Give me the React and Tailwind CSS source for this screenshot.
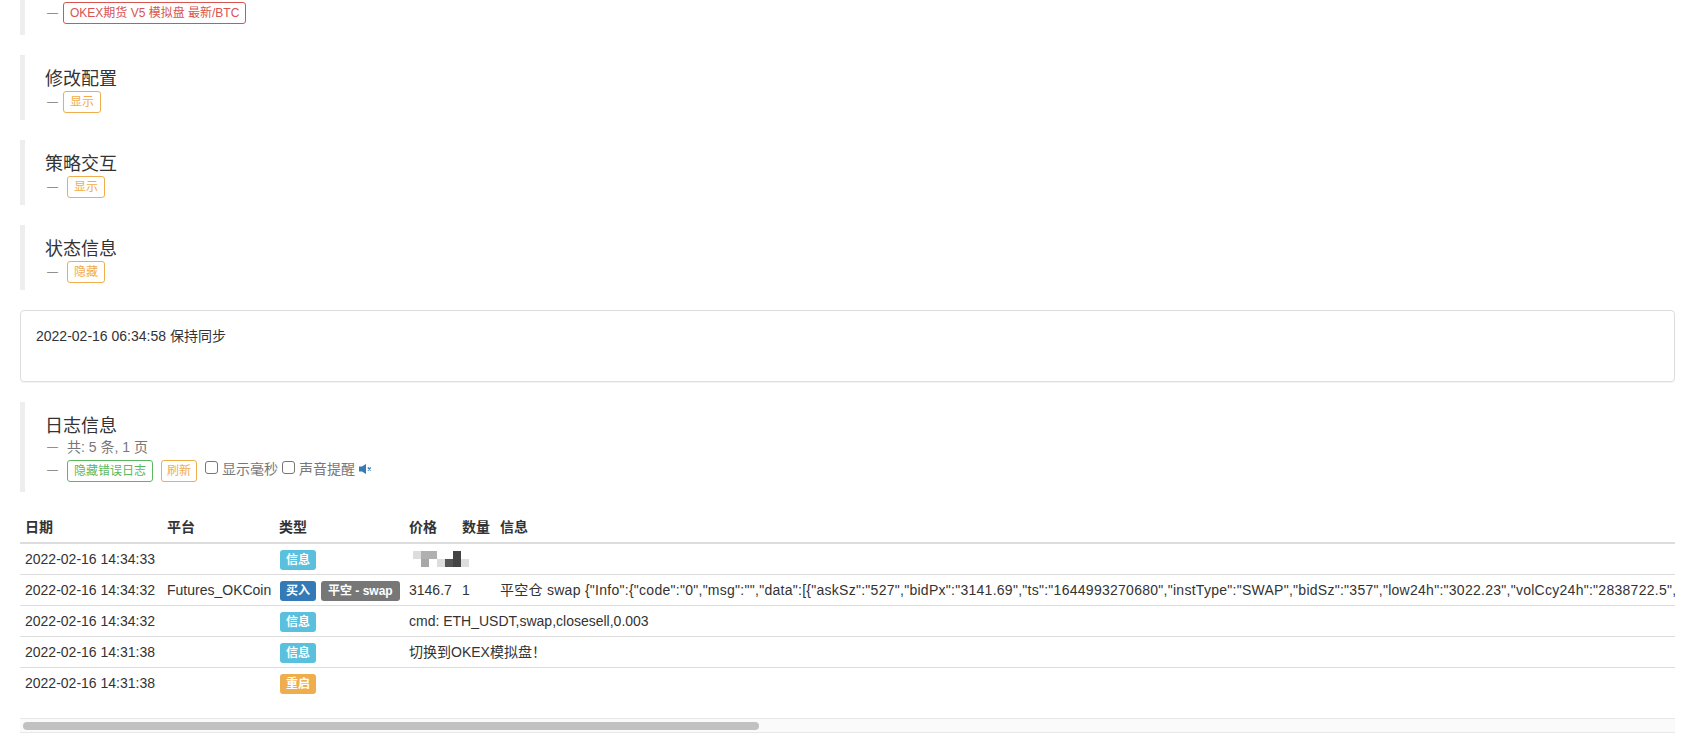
import React from "react";

const font = "font-['Liberation_Sans','Noto_Sans_CJK_SC',sans-serif]";

const Tag = ({ color, children, className = "px-[6px]" }) => {
  const colors = {
    red: "border-[#d9534f] text-[#d9534f]",
    orange: "border-[#f0ad4e] text-[#f0ad4e]",
    green: "border-[#5cb85c] text-[#5cb85c]",
  };
  return (
    <span
      className={`inline-block h-[22px] rounded-[3px] border text-xs leading-[20px] ${colors[color]} ${className}`}
    >
      {children}
    </span>
  );
};

const Dash = ({ className = "w-[16px]" }) => (
  <span className={`ml-[2px] block shrink-0 text-[11px] text-[#777] ${className}`}>—</span>
);

const Section = ({ title, children, className = "" }) => (
  <div className={`border-l-[5px] border-[#eee] pl-5 ${className}`}>
    {title ? (
      <h4 className="pt-[14px] text-lg leading-[20px] text-[#333]">{title}</h4>
    ) : null}
    {children}
  </div>
);

const Badge = ({ bg, children, className = "px-[6px]" }) => (
  <span
    className={`block h-5 rounded-[3px] text-xs leading-5 font-bold text-white ${bg} ${className}`}
  >
    {children}
  </span>
);

const longInfo =
  '平空仓 swap {"Info":{"code":"0","msg":"","data":[{"askSz":"527","bidPx":"3141.69","ts":"1644993270680","instType":"SWAP","bidSz":"357","low24h":"3022.23","volCcy24h":"2838722.5",';

const rows = [
  { date: "2022-02-16 14:34:33", type: <Badge bg="bg-[#5bc0de]">信息</Badge>, blur: true },
  {
    date: "2022-02-16 14:34:32",
    platform: "Futures_OKCoin",
    type: (
      <>
        <Badge bg="bg-[#337ab7]">买入</Badge>
        <Badge bg="bg-[#777]" className="px-[7px]">平空 - swap</Badge>
      </>
    ),
    price: "3146.7",
    amount: "1",
    info: longInfo,
  },
  {
    date: "2022-02-16 14:34:32",
    type: <Badge bg="bg-[#5bc0de]">信息</Badge>,
    msg: "cmd: ETH_USDT,swap,closesell,0.003",
  },
  {
    date: "2022-02-16 14:31:38",
    type: <Badge bg="bg-[#5bc0de]">信息</Badge>,
    msg: "切换到OKEX模拟盘！",
  },
  { date: "2022-02-16 14:31:38", type: <Badge bg="bg-[#f0ad4e]">重启</Badge> },
];

const Mosaic = () => (
  <svg width="60" height="16" viewBox="0 0 60 16" className="block" shapeRendering="crispEdges">
    <rect x="4" y="0" width="8" height="8" fill="#dddddd" />
    <rect x="12" y="0" width="16" height="8" fill="#b0b0b0" />
    <rect x="12" y="8" width="8" height="8" fill="#a8a8a8" />
    <rect x="28" y="8" width="8" height="8" fill="#dddddd" />
    <rect x="36" y="8" width="8" height="8" fill="#555555" />
    <rect x="44" y="0" width="8" height="16" fill="#444444" />
    <rect x="52" y="8" width="8" height="8" fill="#dddddd" />
  </svg>
);

export default function App() {
  return (
    <div className={`${font} h-[737px] overflow-hidden bg-white pr-4 pl-5 text-sm text-[#333]`}>
      <Section className="h-[35px]">
        <div className="flex items-center pt-[2px]">
          <Dash />
          <Tag color="red">OKEX期货 V5 模拟盘 最新/BTC</Tag>
        </div>
      </Section>

      <Section title="修改配置" className="mt-5 h-[65px]">
        <div className="flex items-center pt-[2px]">
          <Dash />
          <Tag color="orange">显示</Tag>
        </div>
      </Section>

      <Section title="策略交互" className="mt-5 h-[65px]">
        <div className="flex items-center pt-[2px]">
          <Dash className="w-5" />
          <Tag color="orange">显示</Tag>
        </div>
      </Section>

      <Section title="状态信息" className="mt-5 h-[65px]">
        <div className="flex items-center pt-[2px]">
          <Dash className="w-5" />
          <Tag color="orange">隐藏</Tag>
        </div>
      </Section>

      <div className="mt-5 h-[72px] rounded-[4px] border border-[#ddd] p-[15px] shadow-[0_1px_1px_rgba(0,0,0,0.05)]">
        2022-02-16 06:34:58 保持同步
      </div>

      <Section title="日志信息" className="mt-5 h-[90px]">
        <div className="flex h-[20px] items-center pt-[2px] text-[#777]">
          <Dash className="w-5" />
          共: 5 条, 1 页
        </div>
        <div className="mt-1 flex items-start leading-[18px] text-[#777]">
          <Dash className="w-5" />
          <Tag color="green">隐藏错误日志</Tag>
          <Tag color="orange" className="ml-2 px-[5px]">刷新</Tag>
          <input
            type="checkbox"
            readOnly
            className="mt-px ml-2 h-[13px] w-[13px] appearance-none rounded-[3px] border border-[#767676] bg-white"
          />
          <span className="ml-1">显示毫秒</span>
          <input
            type="checkbox"
            readOnly
            className="mt-px ml-1 h-[13px] w-[13px] appearance-none rounded-[3px] border border-[#767676] bg-white"
          />
          <span className="ml-1">声音提醒</span>
          <svg width="13" height="10" viewBox="0 0 13 10" className="mt-1 ml-1">
            <path d="M0 2.5h3L7 0v10L3 7.5H0z" fill="#337ab7" />
            <path d="M8.8 3.5l3 3M11.8 3.5l-3 3" stroke="#337ab7" strokeWidth="1.2" fill="none" />
          </svg>
        </div>
      </Section>

      <div className="mt-5 overflow-hidden">
        <table className="w-[3720px] table-fixed border-collapse whitespace-nowrap">
          <colgroup>
            <col className="w-[142px]" />
            <col className="w-[113px]" />
            <col className="w-[129px]" />
            <col className="w-[53px]" />
            <col className="w-[38px]" />
            <col />
          </colgroup>
          <thead>
            <tr className="h-[31px] border-b-2 border-[#ddd] text-left font-semibold">
              <th className="pl-[5px]">日期</th>
              <th className="pl-[5px]">平台</th>
              <th className="pl-[4px]">类型</th>
              <th className="pl-[5px]">价格</th>
              <th className="pl-[5px]">数量</th>
              <th className="pl-[5px]">信息</th>
            </tr>
          </thead>
          <tbody>
            {rows.map((row, i) => (
              <tr key={i} className={`h-[31px] ${i < rows.length - 1 ? "border-b border-[#ddd]" : ""}`}>
                <td className="pl-[5px]">{row.date}</td>
                <td className="pl-[5px]">{row.platform}</td>
                <td className="pl-[5px]">
                  <div className="flex gap-[5px] pt-[2px]">{row.type}</div>
                </td>
                {row.msg ? (
                  <td colSpan={3} className="pl-[5px]">{row.msg}</td>
                ) : row.blur ? (
                  <td colSpan={3} className="pl-[5px]"><Mosaic /></td>
                ) : row.info ? (
                  <>
                    <td className="pl-[5px]">{row.price}</td>
                    <td className="pl-[5px]">{row.amount}</td>
                    <td className="pl-[5px] tracking-[0.27px]">{row.info}</td>
                  </>
                ) : (
                  <td colSpan={3} />
                )}
              </tr>
            ))}
          </tbody>
        </table>
        <div className="mt-[20px] flex h-[15px] items-center border-y border-[#e8e8e8] bg-[#fafafa] px-[3px]">
          <div className="h-2 w-[736px] rounded-full bg-[#c1c1c1]" />
        </div>
      </div>
    </div>
  );
}
